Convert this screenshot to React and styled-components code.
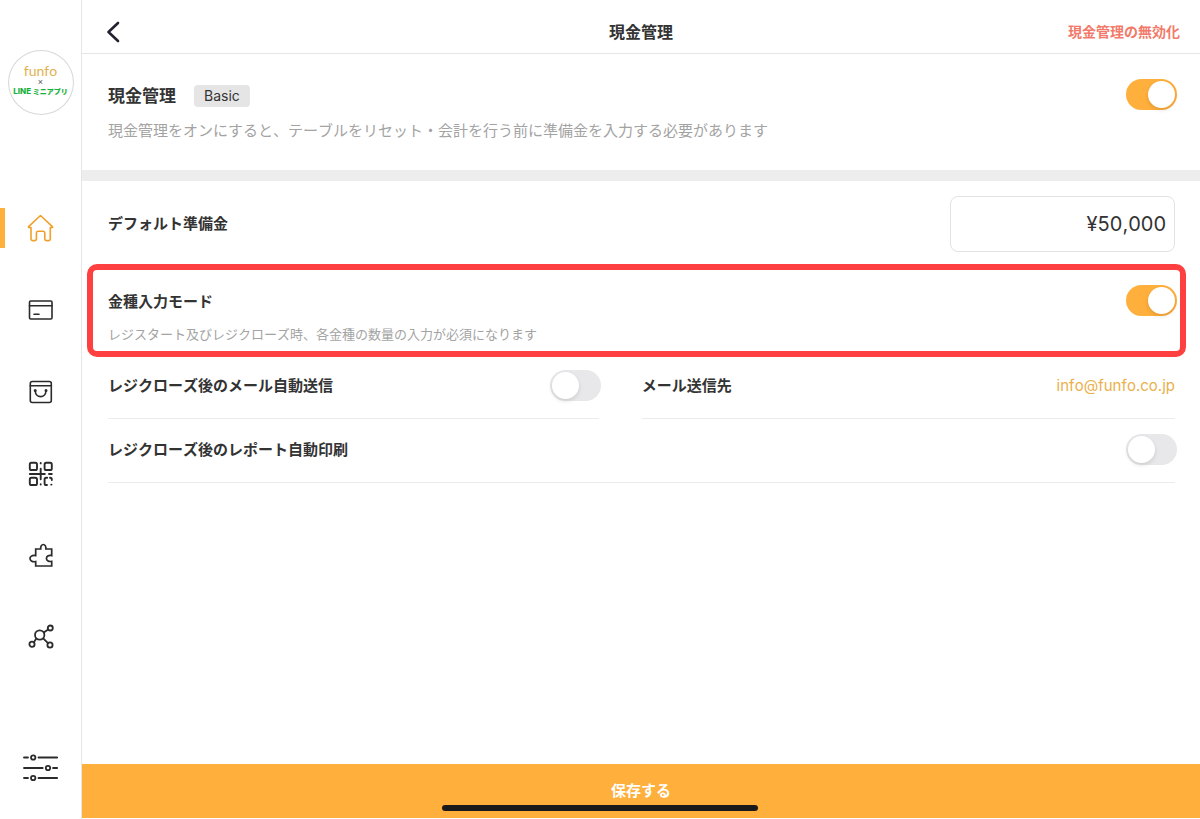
import { useState } from "react";
import styled, { createGlobalStyle } from "styled-components";

const GlobalStyle = createGlobalStyle`
  * {
    box-sizing: border-box;
  }

  body {
    margin: 0;
    background: #fff;
    color: #333;
    font-family: Inter, "Noto Sans CJK JP", sans-serif;
    font-size: 15px;
    font-kerning: none;
    line-height: 24px;
  }

  button,
  input {
    font: inherit;
    color: inherit;
  }
`;

const Page = styled.div`
  display: flex;
  min-height: 100vh;
`;

const Sidebar = styled.aside`
  display: flex;
  flex-direction: column;
  flex: 0 0 82px;
  padding: 50px 0 31px;
  border-right: 1px solid #e6e6e6;
`;

const Logo = styled.div`
  display: flex;
  flex-direction: column;
  align-items: center;
  align-self: center;
  width: 66px;
  height: 65px;
  padding-top: 12px;
  border: 1px solid #d8d8d8;
  border-radius: 50%;
  white-space: nowrap;
`;

const LogoName = styled.span`
  color: #e2b04f;
  font-family: Lato, sans-serif;
  font-size: 14px;
  font-weight: 400;
  line-height: 16px;
`;

const LogoCross = styled.span`
  color: #555;
  font-family: "Liberation Sans", sans-serif;
  font-size: 9px;
  line-height: 6px;
`;

const LogoLine = styled.span`
  color: #14b13c;
  font-size: 8px;
  font-weight: 800;
  line-height: 12px;
`;

const LogoKana = styled.span`
  font-size: 7px;
`;

const Nav = styled.nav`
  display: flex;
  flex-direction: column;
  gap: 42px;
  margin: 93px 0 auto;
`;

const NavLink = styled.a`
  display: flex;
  align-items: center;
  justify-content: center;
  height: 40px;
  padding-right: 5px;
  border-left: 5px solid ${(props) => (props.$active ? "#ffaf3b" : "transparent")};
  color: ${(props) => (props.$active ? "#f0a029" : "#2b2b2b")};
`;

const Icon = styled.svg`
  display: block;
  fill: none;
  stroke: currentColor;
  stroke-width: ${(props) => props.$weight || "1.6"};
  stroke-linejoin: round;
  stroke-linecap: round;
`;

const Main = styled.main`
  display: flex;
  flex-direction: column;
  flex: 1;
  min-width: 0;
  padding-bottom: 1px;
`;

const Header = styled.header`
  display: grid;
  grid-template-columns: 1fr auto 1fr;
  align-items: center;
  height: 54px;
  padding: 10px 20px 0;
  border-bottom: 1px solid #e6e6e6;
`;

const BackButton = styled.button`
  justify-self: start;
  padding: 4px;
  border: 0;
  background: none;
  color: #23232f;
  cursor: pointer;
`;

const Title = styled.h1`
  margin: 0;
  font-size: 16px;
  font-weight: 700;
`;

const DisableButton = styled.button`
  justify-self: end;
  padding: 0;
  border: 0;
  background: none;
  color: #f27a6a;
  font-size: 14px;
  font-weight: 700;
  cursor: pointer;
`;

const Intro = styled.section`
  display: flex;
  justify-content: space-between;
  padding: 25px 25px 27px 26px;
  border-bottom: 11px solid #ededed;
`;

const Heading = styled.div`
  display: flex;
  align-items: center;
  gap: 18px;
  height: 34px;
`;

const HeadingLabel = styled.label`
  font-size: 17px;
  font-weight: 700;
`;

const Badge = styled.span`
  padding: 0 10px;
  border-radius: 4px;
  background: #e5e5e5;
  font-size: 14px;
  line-height: 22px;
`;

const Description = styled.p`
  margin: 6px 0 0;
  color: #a3a3a3;
`;

const Note = styled.p`
  margin: 8px 0 0;
  color: #a3a3a3;
  font-size: 13px;
`;

const Label = styled.label`
  font-weight: 700;
`;

const Toggle = styled.input.attrs({ type: "checkbox", role: "switch" })`
  display: flex;
  flex: none;
  justify-content: ${(props) => (props.checked ? "flex-end" : "flex-start")};
  width: 51px;
  height: 31px;
  margin: 0 -2px 0 0;
  padding: 2px;
  border-radius: 16px;
  background: ${(props) => (props.checked ? "#ffaf3b" : "#e8e8ea")};
  appearance: none;
  cursor: pointer;

  &::before {
    content: "";
    width: 27px;
    height: 27px;
    border-radius: 50%;
    background: #fff;
    box-shadow: 0 2px 4px rgba(0, 0, 0, 0.12);
  }
`;

const DefaultRow = styled.div`
  display: flex;
  align-items: center;
  justify-content: space-between;
  padding: 15px 25px 12px 26px;
`;

const AmountInput = styled.input`
  width: 225px;
  height: 56px;
  padding: 0 8px;
  border: 1px solid #e2e2e2;
  border-radius: 8px;
  background: #fff;
  font-size: 20px;
  text-align: right;
`;

const Highlight = styled.div`
  display: flex;
  justify-content: space-between;
  min-height: 93px;
  margin: 0 14px 0 5px;
  padding: 15px 5px 0 15px;
  border: 6px solid #ff4040;
  border-radius: 10px;
`;

const HighlightText = styled.div`
  padding-top: 5px;
`;

const Settings = styled.div`
  display: grid;
  grid-template-columns: 23fr 25fr;
  gap: 2px 43px;
  padding: 0 25px 0 26px;
`;

const SettingRow = styled.div`
  display: flex;
  align-items: center;
  justify-content: space-between;
  grid-column: ${(props) => (props.$wide ? "1 / -1" : "auto")};
  padding: 13px 0 17px;
  border-bottom: 1px solid #ececec;
`;

const SettingName = styled.span`
  font-weight: 700;
`;

const MailLink = styled.a`
  color: #ebb04a;
  text-decoration: none;
`;

const SaveButton = styled.button`
  height: 54px;
  margin-top: auto;
  border: 0;
  background: #ffaf3b;
  color: #fff;
  font-weight: 700;
  cursor: pointer;
`;

const HomeIndicator = styled.div`
  position: fixed;
  bottom: 8px;
  left: 50%;
  width: 316px;
  height: 6px;
  border-radius: 3px;
  background: #1a1a1a;
  transform: translateX(-50%);
`;

const navItems = [
  {
    name: "ホーム",
    icon: (
      <path d="M13.5 1.5 1.6 12.7q-.4.8.5.8H4V25q0 1.6 1.6 1.6h2.2q1.6 0 1.6-1.6v-6q0-1.7 1.6-1.7h5.2q1.6 0 1.6 1.7v6q0 1.6 1.6 1.6h2.3q1.6 0 1.6-1.6V13.5H25q.9 0 .4-.8Z" />
    ),
  },
  {
    name: "会計",
    icon: (
      <>
        <rect x="2.5" y="5" width="22.5" height="18" rx="1.2" />
        <path d="M2.5 9.8H25M7 18.3h5" />
      </>
    ),
  },
  {
    name: "注文",
    icon: (
      <>
        <rect x="3.3" y="3.5" width="21" height="21" rx="2" />
        <path d="M3.3 7.8h21M8.3 13c0 7.5 10.6 7.5 10.6 0" />
        <circle cx="8.2" cy="12.6" r=".7" />
        <circle cx="19" cy="12.6" r=".7" />
      </>
    ),
  },
  {
    name: "QRコード",
    weight: "1.9",
    icon: (
      <>
        <rect x="2.8" y="2.8" width="7.2" height="7.2" rx="1.6" />
        <rect x="17.6" y="2.8" width="7.2" height="7.2" rx="1.6" />
        <rect x="2.8" y="17.8" width="7.2" height="7.2" rx="1.6" />
        <path d="M13.7 3v.4M13.7 8.6v10.6M13.7 24.2v.4M2.8 14h15M22 14h2.8M20.2 17.8h-1q-1.6 0-1.6 1.6v4q0 1.6 1.6 1.6h.8M23 17.8h.2q1.6 0 1.6 1.6v.6M24.2 24.6h.3" />
      </>
    ),
  },
  {
    name: "拡張機能",
    weight: "1.7",
    icon: (
      <path
        strokeLinejoin="miter"
        d="M8.7 7h5c-.6-6 5.8-6 5.2 0h5.8v6.6c-7-1.4-7 7 0 5.8V24H8.7v-4.4c-7.6 1.4-7.6-7.4 0-6Z"
      />
    ),
  },
  {
    name: "連携",
    weight: "1.8",
    icon: (
      <>
        <circle cx="12.7" cy="11" r="4.7" />
        <circle cx="23.3" cy="4" r="2.5" />
        <circle cx="5" cy="20.2" r="2.6" />
        <circle cx="23" cy="21" r="2.6" />
        <path d="m16.8 8.4 4.3-2.9M9.3 14.6l-2.4 3.6M16.2 14.4l4.8 4.7" />
      </>
    ),
  },
];

export default function App() {
  const [enabled, setEnabled] = useState(true);
  const [denomination, setDenomination] = useState(true);
  const [autoMail, setAutoMail] = useState(false);
  const [autoPrint, setAutoPrint] = useState(false);
  const [amount, setAmount] = useState("¥50,000");

  return (
    <>
      <GlobalStyle />
      <Page>
        <Sidebar>
          <Logo>
            <LogoName>funfo</LogoName>
            <LogoCross>×</LogoCross>
            <LogoLine>
              LINE <LogoKana>ミニアプリ</LogoKana>
            </LogoLine>
          </Logo>
          <Nav>
            {navItems.map((item, idx) => (
              <NavLink key={item.name} href="#" aria-label={item.name} $active={idx === 0}>
                <Icon width="27" height="28" viewBox="0 0 27 28" $weight={item.weight}>
                  {item.icon}
                </Icon>
              </NavLink>
            ))}
          </Nav>
          <NavLink href="#" aria-label="設定">
            <Icon width="35" height="28" viewBox="0 0 35 28" $weight="1.8">
              <path d="M1 3.5h4M15.5 3.5h18.7M1 14h18.7M30 14h4.2M1 24h4M15.5 24h18.7" />
              <circle cx="10.2" cy="3.5" r="2.2" />
              <circle cx="25" cy="14" r="2.2" />
              <circle cx="10.2" cy="24" r="2.2" />
            </Icon>
          </NavLink>
        </Sidebar>

        <Main>
          <Header>
            <BackButton type="button" aria-label="戻る">
              <Icon width="15" height="22" viewBox="0 0 15 22" $weight="2.6">
                <path d="M12 2 2.5 11 12 20" />
              </Icon>
            </BackButton>
            <Title>現金管理</Title>
            <DisableButton type="button">現金管理の無効化</DisableButton>
          </Header>

          <Intro>
            <div>
              <Heading>
                <HeadingLabel htmlFor="enabled">現金管理</HeadingLabel>
                <Badge>Basic</Badge>
              </Heading>
              <Description>
                現金管理をオンにすると、テーブルをリセット・会計を行う前に準備金を入力する必要があります
              </Description>
            </div>
            <Toggle id="enabled" checked={enabled} onChange={() => setEnabled(!enabled)} />
          </Intro>

          <DefaultRow>
            <Label htmlFor="amount">デフォルト準備金</Label>
            <AmountInput
              id="amount"
              type="text"
              value={amount}
              onChange={(e) => setAmount(e.target.value)}
            />
          </DefaultRow>

          <Highlight>
            <HighlightText>
              <Label htmlFor="denomination">金種入力モード</Label>
              <Note>レジスタート及びレジクローズ時、各金種の数量の入力が必須になります</Note>
            </HighlightText>
            <Toggle
              id="denomination"
              checked={denomination}
              onChange={() => setDenomination(!denomination)}
            />
          </Highlight>

          <Settings>
            <SettingRow>
              <Label htmlFor="autoMail">レジクローズ後のメール自動送信</Label>
              <Toggle id="autoMail" checked={autoMail} onChange={() => setAutoMail(!autoMail)} />
            </SettingRow>
            <SettingRow>
              <SettingName>メール送信先</SettingName>
              <MailLink href="mailto:info@funfo.co.jp">info@funfo.co.jp</MailLink>
            </SettingRow>
            <SettingRow $wide>
              <Label htmlFor="autoPrint">レジクローズ後のレポート自動印刷</Label>
              <Toggle
                id="autoPrint"
                checked={autoPrint}
                onChange={() => setAutoPrint(!autoPrint)}
              />
            </SettingRow>
          </Settings>

          <SaveButton type="button">保存する</SaveButton>
        </Main>
      </Page>
      <HomeIndicator />
    </>
  );
}
